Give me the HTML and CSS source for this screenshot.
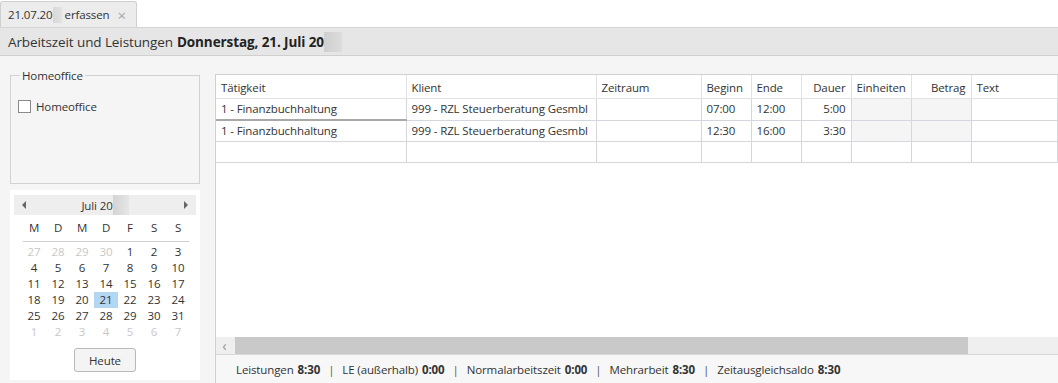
FILE: index.html
```html
<!DOCTYPE html>
<html lang="de">
<head>
    <meta charset="UTF-8">
    <title>Arbeitszeit erfassen</title>
    <link rel="stylesheet" href="styles.css">
</head>
<body>
    <div class="tabbar">
        <div class="tab">21.07.20<span class="blur"></span> erfassen <span class="tab-close">×</span></div>
    </div>
    <div class="titlebar">Arbeitszeit und Leistungen <b>Donnerstag, 21. Juli 20</b><span class="blur blur-title"></span></div>

    <div class="main">
        <div class="side">
            <fieldset class="group">
                <legend>Homeoffice</legend>
                <label class="check"><span class="box"></span>Homeoffice</label>
            </fieldset>

            <div class="calendar">
                <div class="cal-head">
                    <span class="arrow left"></span>
                    <span class="cal-month">Juli 20<span class="blur blur-cal"></span></span>
                    <span class="arrow right"></span>
                </div>
                <div class="cal-grid cal-days">
                    <span>M</span><span>D</span><span>M</span><span>D</span><span>F</span><span>S</span><span>S</span>
                </div>
                <div class="cal-grid" id="calDates"></div>
                <div class="cal-foot"><button class="today">Heute</button></div>
            </div>
        </div>

        <div class="grid-panel">
            <table class="grid">
                <colgroup>
                    <col style="width:190px"><col style="width:190px"><col style="width:105px">
                    <col style="width:50px"><col style="width:50px"><col style="width:50px">
                    <col style="width:60px"><col style="width:60px"><col>
                </colgroup>
                <thead>
                    <tr>
                        <th>Tätigkeit</th><th>Klient</th><th>Zeitraum</th><th>Beginn</th><th>Ende</th>
                        <th class="num">Dauer</th><th>Einheiten</th><th class="num">Betrag</th><th>Text</th>
                    </tr>
                </thead>
                <tbody>
                    <tr class="current">
                        <td>1 - Finanzbuchhaltung</td><td>999 - RZL Steuerberatung Gesmbl</td><td></td>
                        <td>07:00</td><td>12:00</td><td class="num">5:00</td>
                        <td class="ro"></td><td class="ro"></td><td></td>
                    </tr>
                    <tr>
                        <td>1 - Finanzbuchhaltung</td><td>999 - RZL Steuerberatung Gesmbl</td><td></td>
                        <td>12:30</td><td>16:00</td><td class="num">3:30</td>
                        <td class="ro"></td><td class="ro"></td><td></td>
                    </tr>
                    <tr>
                        <td></td><td></td><td></td><td></td><td></td><td></td><td></td><td></td><td></td>
                    </tr>
                </tbody>
            </table>
            <div class="grid-fill"></div>
            <div class="hscroll">
                <span class="hs-btn">&lsaquo;</span>
                <span class="hs-thumb"></span>
            </div>
            <div class="status">
                Leistungen <b>8:30</b><span class="sep">|</span>
                LE (außerhalb) <b>0:00</b><span class="sep">|</span>
                Normalarbeitszeit <b>0:00</b><span class="sep">|</span>
                Mehrarbeit <b>8:30</b><span class="sep">|</span>
                Zeitausgleichsaldo <b>8:30</b>
            </div>
        </div>
    </div>

    <script>
        // fill the month view: trailing June days, July, leading August days
        var dates = document.getElementById('calDates');
        var cells = [];
        [27, 28, 29, 30].forEach(function (d) { cells.push({ d: d, other: true }); });
        for (var i = 1; i <= 31; i++) cells.push({ d: i });
        for (var j = 1; j <= 7; j++) cells.push({ d: j, other: true });
        cells.forEach(function (c) {
            var s = document.createElement('span');
            s.textContent = c.d;
            if (c.other) s.className = 'other';
            if (!c.other && c.d === 21) s.className = 'sel';
            dates.appendChild(s);
        });
    </script>
</body>
</html>
```

FILE: styles.css
```css
html, body {
    margin: 0;
    height: 100%;
}

body {
    font-family: "Open Sans", "Noto Sans", sans-serif;
    font-size: 11.5px;
    letter-spacing: -0.12px;
    color: #333;
    background: #f5f5f5;
    overflow: hidden;
}

.tabbar {
    height: 27px;
    background: #fff;
    display: flex;
    align-items: flex-end;
}

.tab {
    height: 26px;
    box-sizing: border-box;
    width: 137px;
    padding: 0 0 0 7px;
    background: #ececec;
    border: 1px solid #cfcfcf;
    border-bottom: none;
    border-radius: 3px 3px 0 0;
    display: flex;
    align-items: center;
    color: #333;
}

.tab-close {
    color: #a8a8a8;
    font-size: 15px;
    margin-left: 8px;
    line-height: 12px;
}

.blur {
    display: inline-block;
    width: 9px;
    height: 16px;
    background: linear-gradient(90deg, #d8d8d8, #e2e2e2);
    vertical-align: middle;
}

.tab .blur {
    margin-right: 3px;
}

.blur-title {
    width: 18px;
    height: 20px;
    background: linear-gradient(90deg, #cfcfcf, #dcdcdc);
}

.blur-cal {
    width: 16px;
    height: 20px;
    background: linear-gradient(90deg, #d4d4d4, #e6e6e6);
}

.titlebar {
    height: 29px;
    box-sizing: border-box;
    background: #e6e6e6;
    border-top: 1px solid #d4d4d4;
    border-bottom: 1px solid #d0d0d0;
    padding-left: 8px;
    display: flex;
    align-items: center;
    font-size: 13.5px;
    letter-spacing: -0.1px;
    color: #333;
}

.titlebar b {
    margin-left: 4px;
    color: #222;
}

.main {
    display: flex;
    padding: 18px 0 0 10px;
    gap: 15px;
}

.side {
    width: 190px;
    flex: none;
}

.group {
    margin: -6px 0 0 0;
    height: 116px;
    box-sizing: border-box;
    border: 1px solid #d2d2d2;
    padding: 16px 7px 0;
}

.group legend {
    padding: 0 2px;
    margin-left: 2px;
    color: #333;
}

.check {
    display: flex;
    align-items: center;
    gap: 5px;
}

.box {
    width: 11px;
    height: 11px;
    border: 1px solid #8a8a8a;
    background: #fff;
}

.calendar {
    margin-top: 6px;
    background: #fff;
    padding: 5px 4px 6px;
    height: 190px;
    box-sizing: border-box;
}

.cal-head {
    height: 20px;
    background: #eeeeee;
    display: flex;
    align-items: center;
    padding: 0 8px;
}

.cal-month {
    flex: 1;
    display: flex;
    align-items: center;
    justify-content: center;
    color: #333;
}

.arrow {
    width: 0;
    height: 0;
    border-top: 4px solid transparent;
    border-bottom: 4px solid transparent;
}

.arrow.left {
    border-right: 4px solid #666;
}

.arrow.right {
    border-left: 4px solid #666;
}

.cal-grid {
    display: grid;
    grid-template-columns: repeat(7, 24px);
    text-align: center;
    line-height: 16px;
}

.cal-days {
    margin: 4px 8px 0 9px;
    padding-bottom: 4px;
    border-bottom: 1px solid #cfcfcf;
    width: 166px;
    line-height: 18px;
}

.cal-days span {
    margin-left: -2px;
}

#calDates {
    margin-top: 2px;
    margin-left: 8px;
}

#calDates span {
    height: 16px;
}

#calDates .other {
    color: #c8c8c8;
}

#calDates .sel {
    background: #b3d7f3;
}

.cal-foot {
    text-align: center;
    margin-top: 8px;
}

.today {
    font: inherit;
    letter-spacing: inherit;
    color: #333;
    width: 62px;
    height: 24px;
    background: #f4f4f4;
    border: 1px solid #b8b8b8;
    border-radius: 3px;
}

.grid-panel {
    flex: 1;
    height: 309px;
    border: 1px solid #cfcfcf;
    border-right: none;
    background: #fff;
    display: flex;
    flex-direction: column;
}

.grid {
    border-collapse: collapse;
    table-layout: fixed;
    width: 100%;
}

.grid th,
.grid td {
    height: 20px;
    padding: 0 5px;
    line-height: 20px;
    border-right: 1px solid #d4d8de;
    border-bottom: 1px solid #d4d8de;
    text-align: left;
    font-weight: normal;
    white-space: nowrap;
    overflow: hidden;
    color: #333;
}

.grid th {
    padding-top: 3px;
    border-right-color: #e2e2e2;
    border-bottom-color: #e2e2e2;
}

.grid .num {
    text-align: right;
}

.grid td.ro {
    background: #f5f5f5;
}

.grid tr.current td:first-child {
    border-bottom: 2px solid #a8a8a8;
}

.grid-fill {
    flex: 1;
}

.hscroll {
    height: 17px;
    background: #efefef;
    display: flex;
    align-items: center;
}

.hs-btn {
    width: 17px;
    text-align: center;
    color: #999;
    font-size: 15px;
    line-height: 17px;
}

.hs-thumb {
    margin-left: 2px;
    width: 733px;
    height: 17px;
    background: #c9c9c9;
}

.status {
    height: 30px;
    box-sizing: border-box;
    border-top: 1px solid #d8d8d8;
    background: #f7f7f7;
    display: flex;
    align-items: center;
    padding-left: 20px;
    color: #333;
}

.status b {
    margin-left: 4px;
}

.sep {
    margin: 0 8px;
    color: #555;
}
```
